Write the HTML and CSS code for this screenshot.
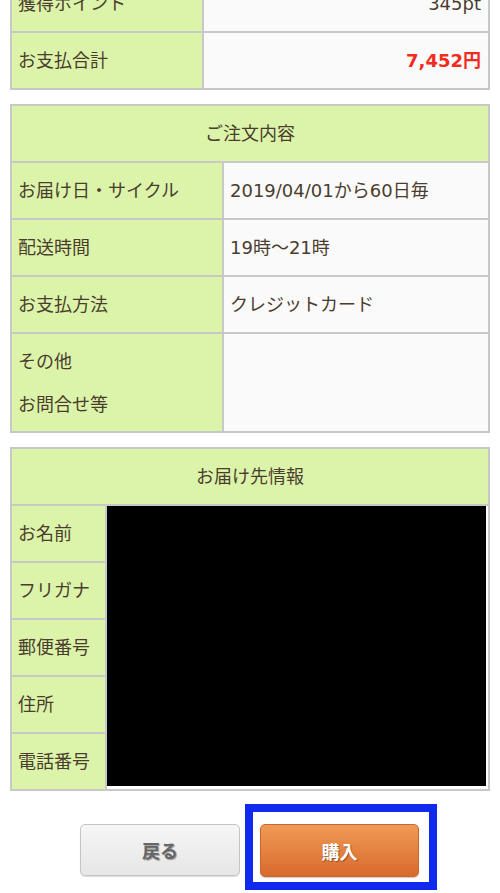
FILE: index.html
```html
<!DOCTYPE HTML>
<html>

<head>
  <meta charset="utf-8">

  <link rel="stylesheet" href="styles.css">

</head>

<body>

  <div class="page">

    <table class="info summary">
      <colgroup>
        <col class="col-summary">
        <col>
      </colgroup>
      <tr>
        <th>獲得ポイント</th>
        <td class="num">345pt</td>
      </tr>
      <tr>
        <th>お支払合計</th>
        <td class="num total">7,452円</td>
      </tr>
    </table>

    <table class="info order">
      <colgroup>
        <col class="col-order">
        <col>
      </colgroup>
      <tr>
        <th class="head" colspan="2">ご注文内容</th>
      </tr>
      <tr>
        <th>お届け日・サイクル</th>
        <td>2019/04/01から60日毎</td>
      </tr>
      <tr>
        <th>配送時間</th>
        <td>19時～21時</td>
      </tr>
      <tr>
        <th>お支払方法</th>
        <td>クレジットカード</td>
      </tr>
      <tr>
        <th class="tall">その他<br>お問合せ等</th>
        <td></td>
      </tr>
    </table>

    <table class="info address">
      <colgroup>
        <col class="col-address">
        <col>
      </colgroup>
      <tr>
        <th class="head" colspan="2">お届け先情報</th>
      </tr>
      <tr>
        <th>お名前</th>
        <td class="hidden-data" rowspan="5">
          <div class="redact"></div>
        </td>
      </tr>
      <tr>
        <th>フリガナ</th>
      </tr>
      <tr>
        <th>郵便番号</th>
      </tr>
      <tr>
        <th>住所</th>
      </tr>
      <tr>
        <th>電話番号</th>
      </tr>
    </table>

    <div class="actions">
      <button class="btn btn-back">戻る</button>
      <div class="mark">
        <button class="btn btn-buy">購入</button>
      </div>
    </div>

  </div>

</body>

</html>
```

FILE: styles.css
```css
body {
  margin: 0;
  font-family: "DejaVu Sans", "Noto Sans CJK JP", sans-serif;
  color: #4b3d2e;
  background: #fff;
}

.page {
  padding: 0 10px;
}

table.info {
  width: 480px;
  border-collapse: collapse;
  table-layout: fixed;
  margin-bottom: 14px;
  font-size: 18px;
}

.info th,
.info td {
  border: 2px solid #c8c8c8;
  padding: 15px 6px;
  line-height: 25px;
  font-weight: normal;
  text-align: left;
  white-space: nowrap;
}

.info th {
  background: #dcf4aa;
}

.info td {
  background: #fafafa;
}

.info .head {
  text-align: center;
}

.info .num {
  text-align: right;
  padding-right: 7px;
}

.info .total {
  color: #f22b20;
  font-weight: bold;
}

.info .tall {
  padding: 6px 6px 5px;
  line-height: 43px;
}

.summary {
  margin-top: -26px;
}

.col-summary {
  width: 192px;
}

.col-order {
  width: 212px;
}

.col-address {
  width: 95px;
}

.info .hidden-data {
  padding: 0 2px 3px 0;
  vertical-align: top;
  background: #fff;
}

.redact {
  height: 280px;
  background: #000;
}

.actions {
  display: flex;
  align-items: flex-start;
  padding-left: 70px;
  margin-top: -1px;
}

.btn {
  width: 160px;
  height: 52px;
  border-radius: 5px;
  font-family: "Noto Sans CJK JP", sans-serif;
  font-size: 18px;
  font-weight: bold;
  cursor: pointer;
}

.btn-back {
  margin-top: 20px;
  border: 1px solid #c4c4c4;
  color: #666;
  background: linear-gradient(#f6f6f6, #e6e6e6);
  text-shadow: 1px 1px 1px rgba(0, 0, 0, .35);
  box-shadow: 0 1px 1px rgba(0, 0, 0, .15);
}

.mark {
  margin-left: 5px;
  padding: 12px 10px 5px 7px;
  border: 8px solid #1029ef;
}

.btn-buy {
  width: 159px;
  height: 53px;
  border: 1px solid #c9672e;
  color: #fff;
  background: linear-gradient(#f09a56, #d86a2c);
  text-shadow: 1px 1px 1px rgba(0, 0, 0, .35);
  box-shadow: 0 1px 1px rgba(0, 0, 0, .2);
}
```
